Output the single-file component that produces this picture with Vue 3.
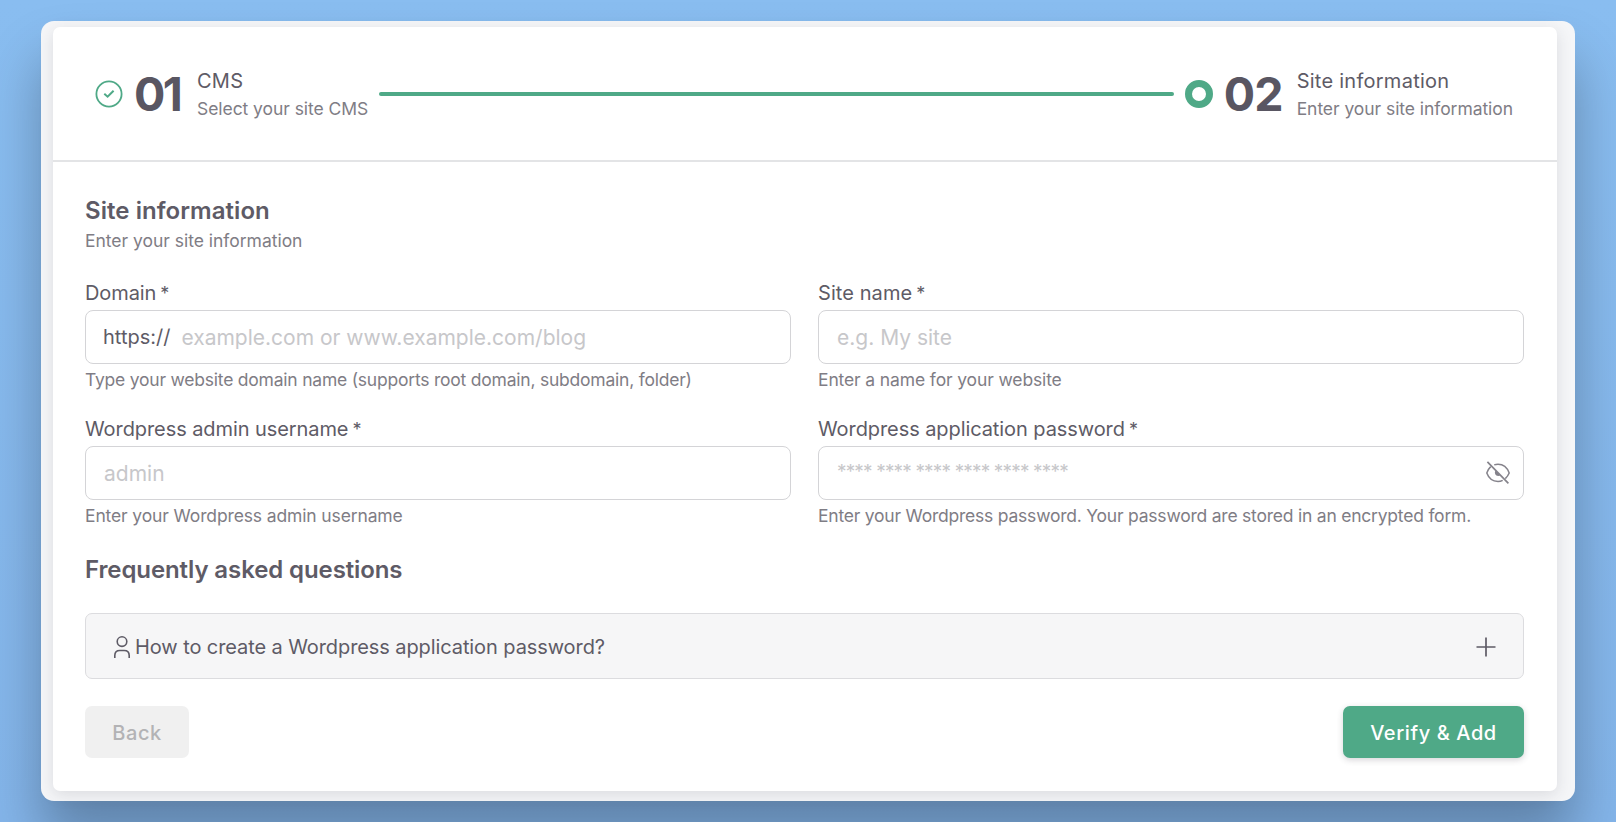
<template>
  <div class="page">
    <div class="frame">
      <div class="card">
        <!-- Stepper -->
        <div class="stepper">
          <div class="step">
            <svg class="step-icon" viewBox="0 0 28 28" fill="none" stroke="currentColor">
              <circle cx="14" cy="14" r="12.6" stroke-width="1.8"></circle>
              <path d="M9.3 13.8L12.6 16.7L18.6 10.7" stroke-width="2"></path>
            </svg>
            <span class="step-number first">01</span>
            <div class="step-text">
              <span class="step-title">CMS</span>
              <span class="step-subtitle">Select your site CMS</span>
            </div>
          </div>
          <div class="step-line"></div>
          <div class="step">
            <span class="step-dot"></span>
            <span class="step-number">02</span>
            <div class="step-text">
              <span class="step-title">Site information</span>
              <span class="step-subtitle">Enter your site information</span>
            </div>
          </div>
        </div>

        <!-- Form -->
        <form class="content" @submit.prevent>
          <h2 class="heading">Site information</h2>
          <p class="subheading">Enter your site information</p>

          <div class="fields">
            <div v-for="field in fields" :key="field.name" class="field" :class="field.name">
              <label class="label" :for="field.name">{{ field.label }}<span class="required">*</span></label>
              <div class="input-box">
                <span v-if="field.prefix" class="prefix">{{ field.prefix }}</span>
                <input
                  :id="field.name"
                  v-model="form[field.name]"
                  class="input"
                  :type="field.name === 'password' && !showPassword ? 'password' : 'text'"
                  :placeholder="field.placeholder"
                />
                <button
                  v-if="field.name === 'password'"
                  type="button"
                  class="eye"
                  @click="showPassword = !showPassword"
                >
                  <svg width="26" height="26" viewBox="0 0 26 26" fill="none" stroke="currentColor" stroke-width="1.5">
                    <path d="M9.2 4.9C10.4 4.5 11.7 4.3 13 4.3C18.2 4.3 22.3 7.9 24.2 13C23.3 15.1 22 17 20.3 18.6"></path>
                    <path d="M5.7 6.6C4 8.2 2.7 10.4 1.8 13C3.7 18.2 7.8 21.4 13 21.4C14.7 21.4 16.3 21 17.7 20.3"></path>
                    <path d="M10.4 10.8C9 13 10.6 16 13.2 16C14.2 16 14.9 15.6 15.4 15.1Z" fill="currentColor" stroke="none"></path>
                    <path d="M2.4 1.9L23.4 23.3" stroke-width="1.7"></path>
                  </svg>
                </button>
              </div>
              <div class="hint">{{ field.hint }}</div>
            </div>
          </div>

          <h2 class="heading faq-heading">Frequently asked questions</h2>
          <div class="faq" @click="faqOpen = !faqOpen">
            <svg class="user" width="18" height="24" viewBox="0 0 18 24" fill="none" stroke="currentColor" stroke-width="1.6">
              <circle cx="9" cy="6.6" r="4.8"></circle>
              <path d="M1.8 23V20.6C1.8 17.6 3.8 15.5 6.8 15.5H11.2C14.2 15.5 16.2 17.6 16.2 20.6V23"></path>
            </svg>
            <span class="faq-title">How to create a Wordpress application password?</span>
            <svg class="plus" width="20" height="20" viewBox="0 0 20 20" fill="none" stroke="currentColor" stroke-width="1.7">
              <path d="M10 0.5V19.5M0.5 10H19.5"></path>
            </svg>
          </div>

          <div class="actions">
            <button type="button" class="btn back" disabled>Back</button>
            <button type="submit" class="btn verify">Verify &amp; Add</button>
          </div>
        </form>
      </div>
    </div>
  </div>
</template>

<script setup>
import { reactive, ref } from 'vue'

const showPassword = ref(false)
const faqOpen = ref(false)

const form = reactive({
  domain: '',
  sitename: '',
  username: '',
  password: ''
})

const fields = [
  {
    name: 'domain',
    label: 'Domain',
    prefix: 'https://',
    placeholder: 'example.com or www.example.com/blog',
    hint: 'Type your website domain name (supports root domain, subdomain, folder)'
  },
  {
    name: 'sitename',
    label: 'Site name',
    placeholder: 'e.g. My site',
    hint: 'Enter a name for your website'
  },
  {
    name: 'username',
    label: 'Wordpress admin username',
    placeholder: 'admin',
    hint: 'Enter your Wordpress admin username'
  },
  {
    name: 'password',
    label: 'Wordpress application password',
    placeholder: '**** **** **** **** **** ****',
    hint: 'Enter your Wordpress password. Your password are stored in an encrypted form.'
  }
]
</script>

<style>
body {
  margin: 0;
  background: #87baee;
}
</style>

<style scoped>
.page {
  box-sizing: border-box;
  height: 822px;
  padding: 21px 41px 20px;
  overflow: hidden;
  background: linear-gradient(180deg, #89bdf0 0%, #84b5ea 100%);
  color: #5e5b66;
  font-family: Inter, "Liberation Sans", sans-serif;
}

.frame {
  box-sizing: border-box;
  height: 780px;
  padding: 6px 18px 11px 12px;
  border-radius: 13px;
  background: #f5f6f8;
  box-shadow: 0 38px 54px rgba(0, 0, 0, 0.28);
}

.card {
  height: 764px;
  border-radius: 7px;
  background: #fff;
  box-shadow: 0 4px 16px rgba(50, 45, 60, 0.13);
}

.stepper {
  box-sizing: border-box;
  display: flex;
  align-items: center;
  height: 135px;
  padding: 0 44px 0 42px;
  border-bottom: 2px solid #e3e4e6;
}

.step {
  display: flex;
  align-items: center;
  flex-shrink: 0;
  white-space: nowrap;
}

.step-icon {
  width: 28px;
  height: 28px;
  color: #4fa987;
}

.step-number {
  width: 73px;
  margin-left: 11px;
  font-size: 46.5px;
  line-height: 54px;
  font-weight: 700;
  letter-spacing: -0.8px;
  color: #595662;
}

.step-number.first {
  width: 63px;
  letter-spacing: -2.6px;
}

.step-text {
  display: flex;
  flex-direction: column;
  padding-top: 2px;
}

.step-title {
  font-size: 20px;
  line-height: 28px;
  letter-spacing: 0.26px;
}

.step-subtitle {
  font-size: 17.5px;
  line-height: 27px;
  letter-spacing: -0.06px;
  color: #7f7d85;
}

.step-line {
  flex: 1;
  height: 4px;
  margin: 0 11px;
  border-radius: 2px;
  background: #4fa987;
}

.step-dot {
  box-sizing: border-box;
  width: 28px;
  height: 28px;
  border: 7px solid #4fa987;
  border-radius: 50%;
}

.content {
  padding: 32px 33px 0 32px;
}

.heading {
  margin: 0;
  font-size: 24px;
  line-height: 34px;
  font-weight: 600;
  letter-spacing: 0.06px;
}

.subheading {
  margin: 0 0 21px;
  font-size: 17.5px;
  line-height: 26px;
  letter-spacing: -0.02px;
  color: #7f7d85;
}

.fields {
  display: grid;
  grid-template-columns: 1fr 1fr;
  gap: 20px 27px;
}

.field {
  height: 116px;
  white-space: nowrap;
}

.label {
  display: block;
  height: 35px;
  font-size: 20px;
  line-height: 36px;
  letter-spacing: -0.08px;
}

.sitename .label {
  letter-spacing: 0.08px;
}

.required {
  margin-left: 4px;
  font-size: 18px;
}

.input-box {
  box-sizing: border-box;
  display: flex;
  align-items: center;
  height: 54px;
  padding: 0 12px 0 18px;
  border: 1.5px solid #d4d4d7;
  border-radius: 8px;
}

.prefix {
  margin: 0 11px 0 -1px;
  font-size: 20px;
}

.input {
  flex: 1;
  min-width: 0;
  padding: 0;
  border: none;
  outline: none;
  background: none;
  font-family: inherit;
  font-size: 21px;
  color: #5e5b66;
}

.input::placeholder {
  color: #c7c7ca;
  opacity: 1;
}

.password .input {
  padding-bottom: 3px;
  font-size: 19px;
  letter-spacing: -0.84px;
}

.eye {
  display: flex;
  padding: 0;
  border: none;
  background: none;
  color: #85838b;
  cursor: pointer;
}

.hint {
  font-size: 17.5px;
  line-height: 31px;
  letter-spacing: -0.22px;
  color: #7f7d85;
}

.sitename .hint,
.username .hint {
  letter-spacing: -0.13px;
}

.faq-heading {
  margin: 26px 0;
  letter-spacing: -0.1px;
}

.faq {
  box-sizing: border-box;
  display: flex;
  align-items: center;
  height: 66px;
  padding: 1px 27px 0;
  border: 1px solid #dcdcdf;
  border-radius: 7px;
  background: #f6f6f7;
  cursor: pointer;
}

.faq-title {
  flex: 1;
  margin-left: 4px;
  padding-top: 1px;
  font-size: 20px;
  letter-spacing: -0.09px;
}

.actions {
  display: flex;
  justify-content: space-between;
  margin-top: 27px;
}

.btn {
  height: 52px;
  padding: 2px 0 0;
  border: none;
  border-radius: 7px;
  font-family: inherit;
  font-size: 20px;
  font-weight: 500;
  letter-spacing: 0.6px;
}

.back {
  width: 104px;
  background: #f0f0f0;
  color: #b3b3b5;
}

.verify {
  width: 181px;
  background: #4fa987;
  color: #fff;
  box-shadow: 0 2px 6px rgba(50, 45, 60, 0.2);
}
</style>
